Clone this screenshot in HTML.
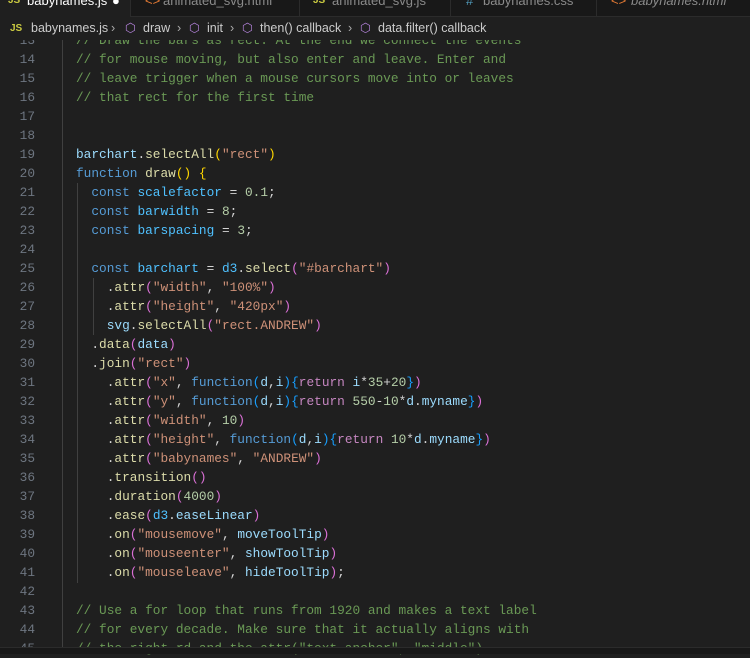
<!DOCTYPE html>
<html><head><meta charset="utf-8"><style>
*{margin:0;padding:0;box-sizing:border-box}
body{width:750px;height:654px;background:#1f1f1f;overflow:hidden;position:relative;font-family:"Liberation Mono",monospace}
.tabs{position:absolute;left:0;top:0;width:750px;height:17px;background:#181818;border-bottom:1px solid #2b2b2b;z-index:3;font-family:"Liberation Sans",sans-serif;font-size:13px;color:#8b8b8b}
.tab{position:absolute;top:0;height:17px;border-right:1px solid #2b2b2b;white-space:nowrap;overflow:hidden}
.tab span{position:absolute;top:-7px;line-height:15px}
.bc{position:absolute;left:0;top:17px;width:750px;height:23px;background:#1f1f1f;z-index:3;font-family:"Liberation Sans",sans-serif;font-size:12.5px;color:#cccccc;line-height:23px;white-space:nowrap}
.bc span{position:absolute}
.js{color:#cbcb41;font-weight:bold;font-size:10px}
.cube{color:#b180d7}
.sep{color:#aaa}
.code{position:absolute;left:0;top:30.5px;width:750px;font-size:12.8px;z-index:1}
.ln{height:19px;line-height:19px;position:relative;white-space:pre}
.n{position:absolute;left:0;width:35px;text-align:right;color:#6e7681}
.t{position:absolute;left:76px;color:#9cdcfe}
.c{color:#6a9955}.k{color:#569cd6}.v{color:#9cdcfe}.cn{color:#4fc1ff}.f{color:#dcdcaa}.s{color:#ce9178}.m{color:#b5cea8}.r{color:#c586c0}.p{color:#d4d4d4}
.y{color:#ffd700}.pu{color:#da70d6}.b{color:#179fff}
.guide{position:absolute;left:62px;top:40px;width:1px;height:607px;background:#404040;z-index:2}
.g2{position:absolute;width:1px;background:#404040;z-index:2}
.status{position:absolute;left:0;top:647px;width:750px;height:7px;background:#181818;border-top:1px solid #2b2b2b;z-index:3}
</style></head><body>
<div class="tabs">
<div class="tab" style="left:0;width:131px;background:#1f1f1f;color:#fff">
<span style="left:8px;color:#cbcb41;font-size:10px;font-weight:bold">JS</span><span style="left:27px">babynames.js</span><span style="left:112px">●</span></div>
<div class="tab" style="left:131px;width:169px"><span style="left:14px;color:#e37933">&lt;&gt;</span><span style="left:32px">animated_svg.html</span></div>
<div class="tab" style="left:300px;width:151px"><span style="left:13px;color:#cbcb41;font-size:10px;font-weight:bold">JS</span><span style="left:32px">animated_svg.js</span></div>
<div class="tab" style="left:451px;width:146px"><span style="left:15px;color:#519aba">#</span><span style="left:32px">babynames.css</span></div>
<div class="tab" style="left:597px;width:153px;border-right:none"><span style="left:14px;color:#e37933">&lt;&gt;</span><span style="left:34px;font-style:italic">babynames.html</span></div>
</div>
<div class="bc">
<span class="js" style="left:10px">JS</span><span style="left:31px">babynames.js</span>
<span class="sep" style="left:111px">›</span><span class="cube" style="left:125px">⬡</span><span style="left:143px">draw</span>
<span class="sep" style="left:177px">›</span><span class="cube" style="left:189px">⬡</span><span style="left:207px">init</span>
<span class="sep" style="left:230px">›</span><span class="cube" style="left:242px">⬡</span><span style="left:260px">then() callback</span>
<span class="sep" style="left:348px">›</span><span class="cube" style="left:360px">⬡</span><span style="left:378px">data.filter() callback</span>
</div>
<div class="guide"></div>
<div class="g2" style="left:77px;top:183px;height:400px"></div>
<div class="g2" style="left:93px;top:278px;height:57px"></div>
<div class="code">
<div class="ln"><span class="n">13</span><span class="t c">// Draw the bars as rect. At the end we connect the events</span></div>
<div class="ln"><span class="n">14</span><span class="t c">// for mouse moving, but also enter and leave. Enter and</span></div>
<div class="ln"><span class="n">15</span><span class="t c">// leave trigger when a mouse cursors move into or leaves</span></div>
<div class="ln"><span class="n">16</span><span class="t c">// that rect for the first time</span></div>
<div class="ln"><span class="n">17</span></div>
<div class="ln"><span class="n">18</span></div>
<div class="ln"><span class="n">19</span><span class="t"><span class="v">barchart</span><span class="p">.</span><span class="f">selectAll</span><span class="y">(</span><span class="s">"rect"</span><span class="y">)</span></span></div>
<div class="ln"><span class="n">20</span><span class="t"><span class="k">function</span> <span class="f">draw</span><span class="y">()</span> <span class="y">{</span></span></div>
<div class="ln"><span class="n">21</span><span class="t">  <span class="k">const</span> <span class="cn">scalefactor</span> <span class="p">=</span> <span class="m">0.1</span><span class="p">;</span></span></div>
<div class="ln"><span class="n">22</span><span class="t">  <span class="k">const</span> <span class="cn">barwidth</span> <span class="p">=</span> <span class="m">8</span><span class="p">;</span></span></div>
<div class="ln"><span class="n">23</span><span class="t">  <span class="k">const</span> <span class="cn">barspacing</span> <span class="p">=</span> <span class="m">3</span><span class="p">;</span></span></div>
<div class="ln"><span class="n">24</span></div>
<div class="ln"><span class="n">25</span><span class="t">  <span class="k">const</span> <span class="cn">barchart</span> <span class="p">=</span> <span class="cn">d3</span><span class="p">.</span><span class="f">select</span><span class="pu">(</span><span class="s">"#barchart"</span><span class="pu">)</span></span></div>
<div class="ln"><span class="n">26</span><span class="t">    <span class="p">.</span><span class="f">attr</span><span class="pu">(</span><span class="s">"width"</span><span class="p">,</span> <span class="s">"100%"</span><span class="pu">)</span></span></div>
<div class="ln"><span class="n">27</span><span class="t">    <span class="p">.</span><span class="f">attr</span><span class="pu">(</span><span class="s">"height"</span><span class="p">,</span> <span class="s">"420px"</span><span class="pu">)</span></span></div>
<div class="ln"><span class="n">28</span><span class="t">    <span class="v">svg</span><span class="p">.</span><span class="f">selectAll</span><span class="pu">(</span><span class="s">"rect.ANDREW"</span><span class="pu">)</span></span></div>
<div class="ln"><span class="n">29</span><span class="t">  <span class="p">.</span><span class="f">data</span><span class="pu">(</span><span class="v">data</span><span class="pu">)</span></span></div>
<div class="ln"><span class="n">30</span><span class="t">  <span class="p">.</span><span class="f">join</span><span class="pu">(</span><span class="s">"rect"</span><span class="pu">)</span></span></div>
<div class="ln"><span class="n">31</span><span class="t">    <span class="p">.</span><span class="f">attr</span><span class="pu">(</span><span class="s">"x"</span><span class="p">,</span> <span class="k">function</span><span class="b">(</span><span class="v">d</span><span class="p">,</span><span class="v">i</span><span class="b">){</span><span class="r">return</span> <span class="v">i</span><span class="p">*</span><span class="m">35</span><span class="p">+</span><span class="m">20</span><span class="b">}</span><span class="pu">)</span></span></div>
<div class="ln"><span class="n">32</span><span class="t">    <span class="p">.</span><span class="f">attr</span><span class="pu">(</span><span class="s">"y"</span><span class="p">,</span> <span class="k">function</span><span class="b">(</span><span class="v">d</span><span class="p">,</span><span class="v">i</span><span class="b">){</span><span class="r">return</span> <span class="m">550</span><span class="p">-</span><span class="m">10</span><span class="p">*</span><span class="v">d</span><span class="p">.</span><span class="v">myname</span><span class="b">}</span><span class="pu">)</span></span></div>
<div class="ln"><span class="n">33</span><span class="t">    <span class="p">.</span><span class="f">attr</span><span class="pu">(</span><span class="s">"width"</span><span class="p">,</span> <span class="m">10</span><span class="pu">)</span></span></div>
<div class="ln"><span class="n">34</span><span class="t">    <span class="p">.</span><span class="f">attr</span><span class="pu">(</span><span class="s">"height"</span><span class="p">,</span> <span class="k">function</span><span class="b">(</span><span class="v">d</span><span class="p">,</span><span class="v">i</span><span class="b">){</span><span class="r">return</span> <span class="m">10</span><span class="p">*</span><span class="v">d</span><span class="p">.</span><span class="v">myname</span><span class="b">}</span><span class="pu">)</span></span></div>
<div class="ln"><span class="n">35</span><span class="t">    <span class="p">.</span><span class="f">attr</span><span class="pu">(</span><span class="s">"babynames"</span><span class="p">,</span> <span class="s">"ANDREW"</span><span class="pu">)</span></span></div>
<div class="ln"><span class="n">36</span><span class="t">    <span class="p">.</span><span class="f">transition</span><span class="pu">()</span></span></div>
<div class="ln"><span class="n">37</span><span class="t">    <span class="p">.</span><span class="f">duration</span><span class="pu">(</span><span class="m">4000</span><span class="pu">)</span></span></div>
<div class="ln"><span class="n">38</span><span class="t">    <span class="p">.</span><span class="f">ease</span><span class="pu">(</span><span class="cn">d3</span><span class="p">.</span><span class="v">easeLinear</span><span class="pu">)</span></span></div>
<div class="ln"><span class="n">39</span><span class="t">    <span class="p">.</span><span class="f">on</span><span class="pu">(</span><span class="s">"mousemove"</span><span class="p">,</span> <span class="v">moveToolTip</span><span class="pu">)</span></span></div>
<div class="ln"><span class="n">40</span><span class="t">    <span class="p">.</span><span class="f">on</span><span class="pu">(</span><span class="s">"mouseenter"</span><span class="p">,</span> <span class="v">showToolTip</span><span class="pu">)</span></span></div>
<div class="ln"><span class="n">41</span><span class="t">    <span class="p">.</span><span class="f">on</span><span class="pu">(</span><span class="s">"mouseleave"</span><span class="p">,</span> <span class="v">hideToolTip</span><span class="pu">)</span><span class="p">;</span></span></div>
<div class="ln"><span class="n">42</span></div>
<div class="ln"><span class="n">43</span><span class="t c">// Use a for loop that runs from 1920 and makes a text label</span></div>
<div class="ln"><span class="n">44</span><span class="t c">// for every decade. Make sure that it actually aligns with</span></div>
<div class="ln"><span class="n">45</span><span class="t c">// the right rd and the.attr("text-anchor", "middle")</span></div>
</div>
<div class="status"></div>
</body></html>
